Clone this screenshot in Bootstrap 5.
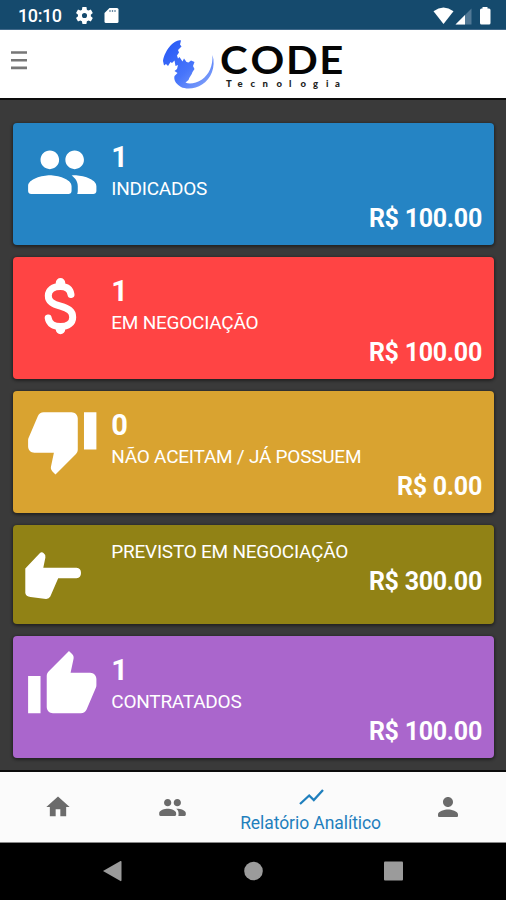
<!DOCTYPE html>
<html lang="pt-BR">
<head>
<meta charset="utf-8">
<meta name="viewport" content="width=device-width, initial-scale=1">
<title>Relatório Analítico</title>
<link href="https://cdn.jsdelivr.net/npm/bootstrap@5.3.0/dist/css/bootstrap.min.css" rel="stylesheet">
<style>
  body { font-family: Roboto, "Noto Sans", sans-serif; background: #3a3a3a; }
  svg { display: block; flex: none; }
  .screen { width: 506px; height: 900px; }
  .status-bar { height: 30px; background: #154a6d; padding: 2px 15px 0 18px; border-bottom: 1px solid #41698a; }
  .clock { font-size: 18px; line-height: 28px; font-weight: 500; letter-spacing: -.4px; width: 58px; }
  .card-glyph { margin-left: 11px; }
  .app-header { height: 70px; border-bottom: 2px solid #0c0c0c; padding-left: 11px; }
  .menu-icon { margin-top: 20px; }
  .brand-logo { margin: 3px 0 0 129px; }
  .report { padding: 23.4px 12px 0 12.6px; gap: 12px; }
  .stat { height: 122px; border-radius: 4px; padding: 0 12px 0 12px; box-shadow: 0 1px 3px 1px rgba(0,0,0,.42); }
  .stat-short { height: 99px; }
  .stat-icon { width: 86.7px; padding-top: 12px; }
  .stat-text { padding-top: 15px; }
  .stat-short .stat-text { padding-top: 13.2px; }
  .stat-count { font-size: 29px; line-height: 38px; }
  .stat-label { font-size: 19px; line-height: 26px; letter-spacing: -.24px; }
  .stat-value { font-size: 25px; line-height: 33px; letter-spacing: -.27px; }
  .is-blue { background: #2584c4; }
  .is-red { background: #ff4444; }
  .is-gold { background: #d9a330; }
  .is-olive { background: #918215; }
  .is-purple { background: #aa66cc; }
  .tab-bar { height: 73px; border-top: 2px solid #0c0c0c; border-bottom: 1px solid #888; background: #fbfbfb; color: #6b6b6b; }
  .tab-side { width: 115.5px; }
  .tab-current { width: 161px; color: #1f7fbd; font-size: 17.5px; line-height: 24px; letter-spacing: -.07px; padding-top: 13px; }
  .system-bar { height: 57px; background: #000; color: #9b9b9b; padding-bottom: 1px; }
</style>
</head>
<body>
<div class="screen d-flex flex-column overflow-hidden">
  <div class="status-bar d-flex align-items-center text-white">
    <span class="clock">10:10</span>
    <svg width="17" height="17" viewBox="2 2 20 20" fill="currentColor"><path d="M19.4 13c0-.3.1-.6.1-1s0-.7-.1-1l2.1-1.600c.2-.2.2-.4.1-.6l-2-3.500c-.1-.2-.4-.3-.6-.2l-2.500 1c-.5-.4-1.100-.7-1.700-1l-.4-2.600c0-.2-.2-.4-.5-.4h-4c-.2 0-.5.2-.5.4l-.4 2.600c-.6.3-1.200.6-1.700 1l-2.500-1c-.2-.1-.5 0-.6.2l-2 3.500c-.1.2-.1.5.1.6l2.100 1.600c0 .3-.1.7-.1 1s0 .7.1 1l-2.100 1.600c-.2.2-.2.4-.1.6l2 3.500c.1.2.4.3.6.2l2.500-1c.5.4 1.100.7 1.700 1l.4 2.600c0 .2.3.4.5.4h4c.3 0 .5-.2.5-.4l.4-2.600c.6-.3 1.200-.6 1.700-1l2.500 1c.2.1.5 0 .6-.2l2-3.500c.1-.2.1-.4-.1-.6zM12 15a3 3 0 1 1 0-6 3 3 0 0 1 0 6z"/></svg>
    <svg class="card-glyph me-auto" width="15" height="17" viewBox="0 0 15 17"><path d="M5.500 1H13a1.500 1.500 0 0 1 1.500 1.500v12A1.500 1.500 0 0 1 13 16H2a1.500 1.500 0 0 1-1.500-1.500V6z" fill="#fff"/><path d="M6 3v2M8.500 3v2M11 3v2" stroke="#6b8ba5" stroke-width="1.300"/></svg>
    <svg width="58" height="20" viewBox="0 0 58 20"><path d="M.5 5.200Q10.500-2 20.500 5.200L10.500 18z" fill="#fff"/><path d="M38.500 2.500V18.500H22.500z" fill="#517895"/><path d="M32 9V18.500H22.500z" fill="#fff"/><path d="M49.500 2.500V1h5v1.500H56a1.500 1.500 0 0 1 1.500 1.500v13a1.500 1.500 0 0 1-1.500 1.500h-7.500A1.500 1.500 0 0 1 47 17V4a1.500 1.500 0 0 1 1.500-1.500z" fill="#fff"/></svg>
  </div>

  <header class="app-header bg-white d-flex align-items-start">
    <svg class="menu-icon" width="16" height="20" viewBox="0 0 16 20"><path d="M0 2.500h16M0 10.200h16M0 17.900h16" stroke="#777" stroke-width="2.600"/></svg>
    <svg class="brand-logo" width="190" height="62" viewBox="156 33 190 62" role="img" aria-label="CODE Tecnologia">
      <defs>
        <linearGradient id="ink" x1="0" y1="0" x2="1" y2="1"><stop offset="0" stop-color="#2456f5"/><stop offset=".55" stop-color="#4775fb"/><stop offset="1" stop-color="#8eaaf8"/></linearGradient>
      </defs>
      <path fill="url(#ink)" d="M181 40.500C178 39.500 174 42 171 45C167 49 163.500 56 163 61L164 65.500L166 64L168 66L170.500 62L172 63L174.500 60.500L175.500 66L178 65L177 69L174.500 71L177.500 73L174.500 76C173.500 80 176 84 181 87C186 89.500 196 89 202 84.500C211 79 216 67 212.500 55C213 66 209 74.500 202 79.500C196 83.500 189 84.500 185.500 82.500L188.500 80C189 77 192 75 192.500 72L194.500 69L193 66L194.500 62L191 60.500L188.500 62.500L186.500 62L184 58.500L182.500 61.500L179.500 57L178 58.500L177 55.500L179 52.500L178 50L181.500 46.500L180 44.500Z"/>
      <text transform="translate(220 73.500) scale(1.1 1)" x="0 27.800 60 90.200" font-family="Lato, sans-serif" font-weight="700" font-size="38" fill="#050505">CODE</text>
      <text x="226 237.500 250.500 262.500 276.500 289 300.500 313 326 335" y="87" font-family="Lato, sans-serif" font-weight="900" font-size="9.500" fill="#222">Tecnologia</text>
    </svg>
  </header>

  <main class="report d-flex flex-column flex-grow-1">
    <section class="stat is-blue text-white d-flex">
      <div class="stat-icon"><svg width="74.500" height="74.500" viewBox="0 0 24 24" fill="currentColor"><path d="M16 11c1.660 0 2.990-1.340 2.990-3S17.660 5 16 5s-3 1.340-3 3 1.340 3 3 3zm-8 0c1.660 0 2.990-1.340 2.990-3S9.660 5 8 5 5 6.340 5 8s1.340 3 3 3zm0 2c-2.330 0-7 1.170-7 3.500V18c0 .55.45 1 1 1h12c.55 0 1-.45 1-1v-1.500c0-2.330-4.670-3.500-7-3.500zm8 0c-.29 0-.62.02-.97.05 1.160.84 1.970 1.970 1.970 3.450V18c0 .35-.07.69-.18 1H22c.55 0 1-.45 1-1v-1.500c0-2.330-4.670-3.500-7-3.500z"/></svg></div>
      <div class="stat-text flex-grow-1">
        <div class="stat-count fw-bold">1</div>
        <div class="stat-label">INDICADOS</div>
        <div class="stat-value fw-bold text-end">R$ 100.00</div>
      </div>
    </section>

    <section class="stat is-red text-white d-flex">
      <div class="stat-icon"><svg width="74.500" height="74.500" viewBox="25 269.500 74.500 74.500" fill="none" stroke="currentColor" stroke-linecap="round"><path stroke-width="7" d="M71 295C70.200 289.500 66.500 287 60.500 287C53 287 48.300 290.700 48.300 296.200C48.300 302 52.500 304.400 60.500 306.700C68.500 309 72.700 311.500 72.700 317.700C72.700 323.500 68 327 60.500 327C53.500 327 49 324 48.200 318.500"/><path stroke-width="9.500" d="M60.500 283.300v1.500M60.500 329v1"/></svg></div>
      <div class="stat-text flex-grow-1">
        <div class="stat-count fw-bold">1</div>
        <div class="stat-label">EM NEGOCIAÇÃO</div>
        <div class="stat-value fw-bold text-end">R$ 100.00</div>
      </div>
    </section>

    <section class="stat is-gold text-white d-flex">
      <div class="stat-icon"><svg width="74.500" height="74.500" viewBox="0 0 24 24" fill="currentColor"><path d="M15 3H6c-.83 0-1.540.5-1.840 1.220l-3.020 7.050c-.09.23-.14.47-.14.73v2c0 1.100.9 2 2 2h6.310l-.95 4.570-.03.32c0 .41.17.79.44 1.060L9.830 23l6.590-6.590c.36-.36.58-.86.58-1.410V5c0-1.100-.9-2-2-2zm4 0v12h4V3h-4z"/></svg></div>
      <div class="stat-text flex-grow-1">
        <div class="stat-count fw-bold">0</div>
        <div class="stat-label">NÃO ACEITAM / JÁ POSSUEM</div>
        <div class="stat-value fw-bold text-end">R$ 0.00</div>
      </div>
    </section>

    <section class="stat stat-short is-olive text-white d-flex">
      <div class="stat-icon"><svg width="74.500" height="74.500" viewBox="25 537 74.500 74.500" fill="currentColor"><path d="M25.300 568.500L39.500 553.600Q41.500 551.500 43.500 553Q46 554.800 45.400 557.500L43.300 567.800H76.500Q81 568.300 81 573Q81 577.700 76.500 578.200H58.200L50.300 596.500Q49 599 46 598.900L30.500 597Q25.800 596.500 25.300 593Z"/></svg></div>
      <div class="stat-text flex-grow-1">
        <div class="stat-label">PREVISTO EM NEGOCIAÇÃO</div>
        <div class="stat-value fw-bold text-end">R$ 300.00</div>
      </div>
    </section>

    <section class="stat is-purple text-white d-flex">
      <div class="stat-icon"><svg width="74.500" height="74.500" viewBox="0 0 24 24" fill="currentColor"><path d="M1 21h4V9H1v12zm22-11c0-1.100-.9-2-2-2h-6.310l.95-4.570.03-.32c0-.41-.17-.79-.44-1.060L14.170 1 7.590 7.590C7.220 7.950 7 8.450 7 9v10c0 1.100.9 2 2 2h9c.83 0 1.540-.5 1.840-1.220l3.020-7.050c.09-.23.14-.47.14-.73v-2z"/></svg></div>
      <div class="stat-text flex-grow-1">
        <div class="stat-count fw-bold">1</div>
        <div class="stat-label">CONTRATADOS</div>
        <div class="stat-value fw-bold text-end">R$ 100.00</div>
      </div>
    </section>
  </main>

  <nav class="tab-bar d-flex align-items-center">
    <div class="tab-side d-flex justify-content-center"><svg width="28" height="28" viewBox="0 0 24 24" fill="currentColor"><path d="M10 20v-6h4v6h5v-8h3L12 3 2 12h3v8z"/></svg></div>
    <div class="tab-side d-flex justify-content-center"><svg width="29" height="29" viewBox="0 0 24 24" fill="currentColor"><path d="M16 11c1.660 0 2.990-1.340 2.990-3S17.660 5 16 5s-3 1.340-3 3 1.340 3 3 3zm-8 0c1.660 0 2.990-1.340 2.990-3S9.660 5 8 5 5 6.340 5 8s1.340 3 3 3zm0 2c-2.330 0-7 1.170-7 3.500V18c0 .55.45 1 1 1h12c.55 0 1-.45 1-1v-1.500c0-2.330-4.670-3.500-7-3.500zm8 0c-.29 0-.62.02-.97.05 1.160.84 1.970 1.970 1.970 3.450V18c0 .35-.07.69-.18 1H22c.55 0 1-.45 1-1v-1.500c0-2.330-4.670-3.500-7-3.500z"/></svg></div>
    <div class="tab-current h-100 d-flex flex-column align-items-center text-nowrap">
      <svg width="28" height="26" viewBox="0 0 28 26"><path d="M3 19l9.200-8.500 4.600 4.500L26 5" fill="none" stroke="currentColor" stroke-width="2.300"/></svg>
      <span>Relatório Analítico</span>
    </div>
    <div class="tab-side d-flex justify-content-center"><svg width="30" height="30" viewBox="0 0 24 24" fill="currentColor"><path d="M12 12c2.210 0 4-1.790 4-4s-1.790-4-4-4-4 1.790-4 4 1.790 4 4 4zm0 2c-2.670 0-8 1.340-8 4v1c0 .55.45 1 1 1h14c.55 0 1-.45 1-1v-1c0-2.660-5.330-4-8-4z"/></svg></div>
  </nav>

  <div class="system-bar d-flex justify-content-center align-items-center">
    <svg width="300" height="24" viewBox="0 0 300 24" fill="currentColor"><path d="M0 12L17.500 2Q18.500 1.500 18.500 3V21Q18.500 22.500 17.500 22z"/><circle cx="150.500" cy="12" r="9.300"/><rect x="281" y="2.500" width="19" height="19" rx="1"/></svg>
  </div>
</div>
<script src="https://cdn.jsdelivr.net/npm/bootstrap@5.3.0/dist/js/bootstrap.bundle.min.js"></script>
</body>
</html>
